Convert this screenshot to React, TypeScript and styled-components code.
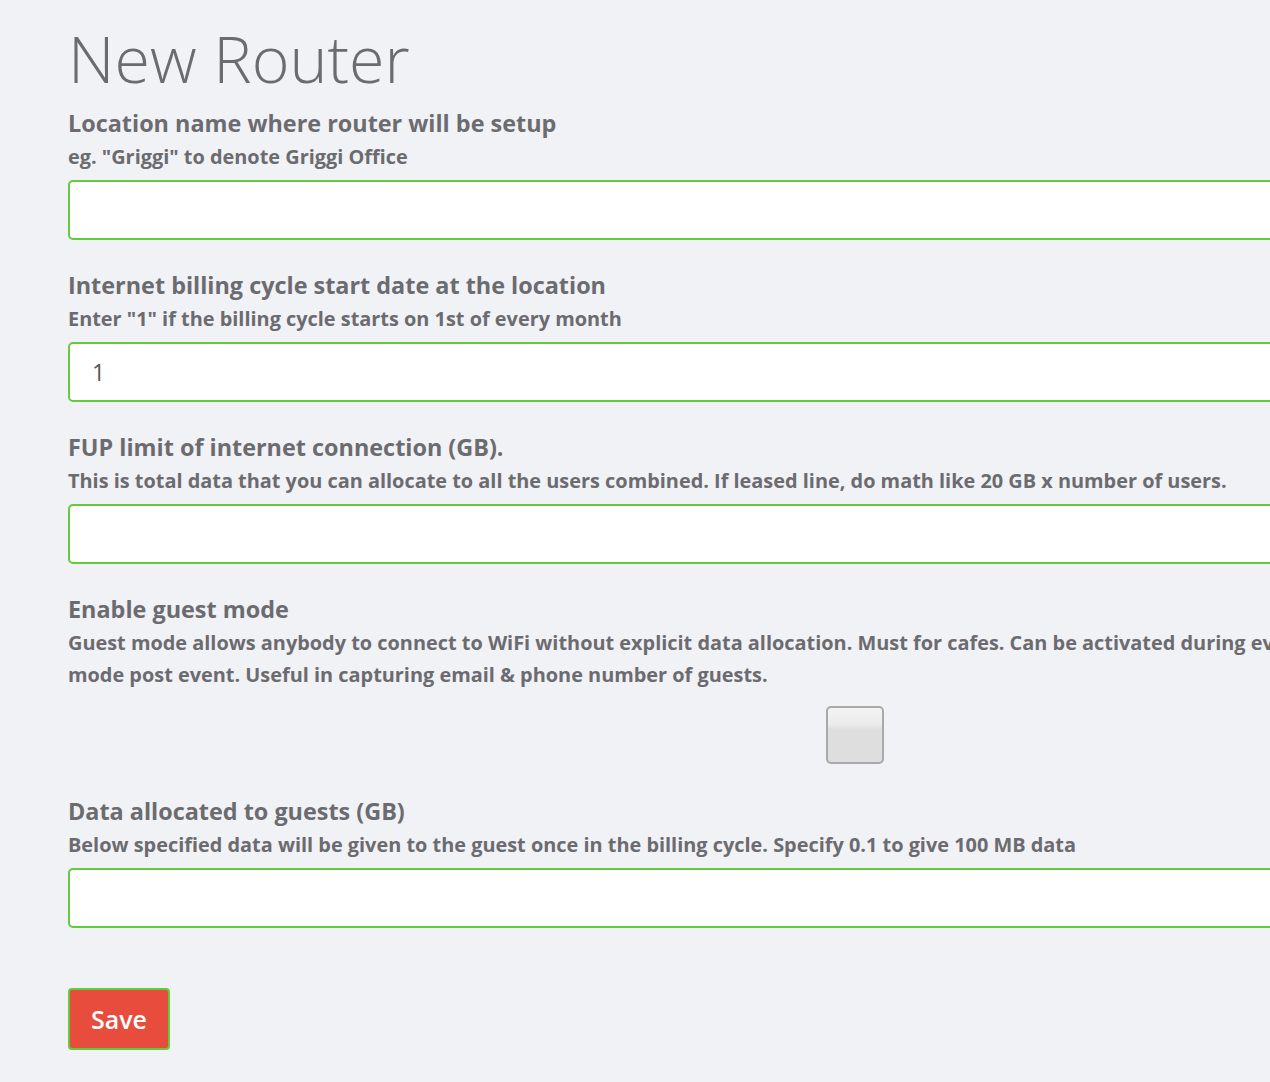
import styled, { createGlobalStyle } from "styled-components";

const GlobalStyle = createGlobalStyle`
  html, body {
    margin: 0;
    padding: 0;
    background: #f1f2f6;
    overflow: hidden;
  }
  body {
    font-family: "Open Sans", "Liberation Sans", sans-serif;
    color: #6b6b70;
  }
`;

const Page = styled.div`
  width: 1572px;
  padding: 16px 0 32px 68px;
`;

const Title = styled.h1`
  margin: 0 0 6px;
  font-size: 64.5px;
  font-weight: 300;
  line-height: 84px;
  color: #6b6b70;
`;

const Form = styled.form`
  display: flex;
  flex-direction: column;
`;

const Field = styled.div`
  display: flex;
  flex-direction: column;
  margin-bottom: 28px;
`;

const Label = styled.label`
  font-size: 23.4px;
  font-weight: 700;
  line-height: 34px;
`;

const Hint = styled.div<{ $maxWidth?: number }>`
  max-width: ${(p) => (p.$maxWidth ? `${p.$maxWidth}px` : "none")};
  font-size: 19.9px;
  font-weight: 700;
  line-height: 32px;
  margin-top: 1px;
  margin-bottom: 7px;
`;

const Input = styled.input`
  box-sizing: border-box;
  width: 100%;
  height: 60px;
  border: 2px solid #62cc3a;
  border-radius: 5px;
  background: #fff;
  padding: 0 22px;
  font-family: "Open Sans", "Liberation Sans", sans-serif;
  font-size: 23px;
  color: #555;
  outline: none;
`;

const CheckRow = styled.div`
  display: flex;
  justify-content: center;
  padding: 8px 0 2px 2px;
`;

const Check = styled.input`
  appearance: none;
  margin: 0;
  width: 58px;
  height: 58px;
  border: 2px solid #a9a9a9;
  border-radius: 5px;
  background: linear-gradient(#f3f3f3 0%, #ebebeb 30%, #dedede 40%, #dedede 100%);
`;

const SaveButton = styled.button`
  align-self: flex-start;
  width: 102px;
  height: 62px;
  margin-top: 32px;
  border: 2px solid #62cc3a;
  border-radius: 4px;
  background: #e74c3c;
  color: #fff;
  font-family: "Open Sans", "Liberation Sans", sans-serif;
  font-size: 25px;
  font-weight: 600;
  cursor: pointer;
`;

const fields = [
  {
    label: "Location name where router will be setup",
    hint: 'eg. "Griggi" to denote Griggi Office',
    value: "",
  },
  {
    label: "Internet billing cycle start date at the location",
    hint: 'Enter "1" if the billing cycle starts on 1st of every month',
    value: "1",
  },
  {
    label: "FUP limit of internet connection (GB).",
    hint: "This is total data that you can allocate to all the users combined. If leased line, do math like 20 GB x number of users.",
    value: "",
  },
];

export default function App() {
  return (
    <>
      <GlobalStyle />
      <Page>
        <Title>New Router</Title>
        <Form onSubmit={(e) => e.preventDefault()}>
          {fields.map((f) => (
            <Field key={f.label}>
              <Label>{f.label}</Label>
              <Hint>{f.hint}</Hint>
              <Input defaultValue={f.value} />
            </Field>
          ))}
          <Field>
            <Label>Enable guest mode</Label>
            <Hint $maxWidth={1500}>
              Guest mode allows anybody to connect to WiFi without explicit data allocation. Must for cafes. Can be
              activated during events and switched to normal mode post event. Useful in capturing email &amp; phone
              number of guests.
            </Hint>
            <CheckRow>
              <Check type="checkbox" />
            </CheckRow>
          </Field>
          <Field>
            <Label>Data allocated to guests (GB)</Label>
            <Hint>Below specified data will be given to the guest once in the billing cycle. Specify 0.1 to give 100 MB data</Hint>
            <Input />
          </Field>
          <SaveButton type="submit">Save</SaveButton>
        </Form>
      </Page>
    </>
  );
}
